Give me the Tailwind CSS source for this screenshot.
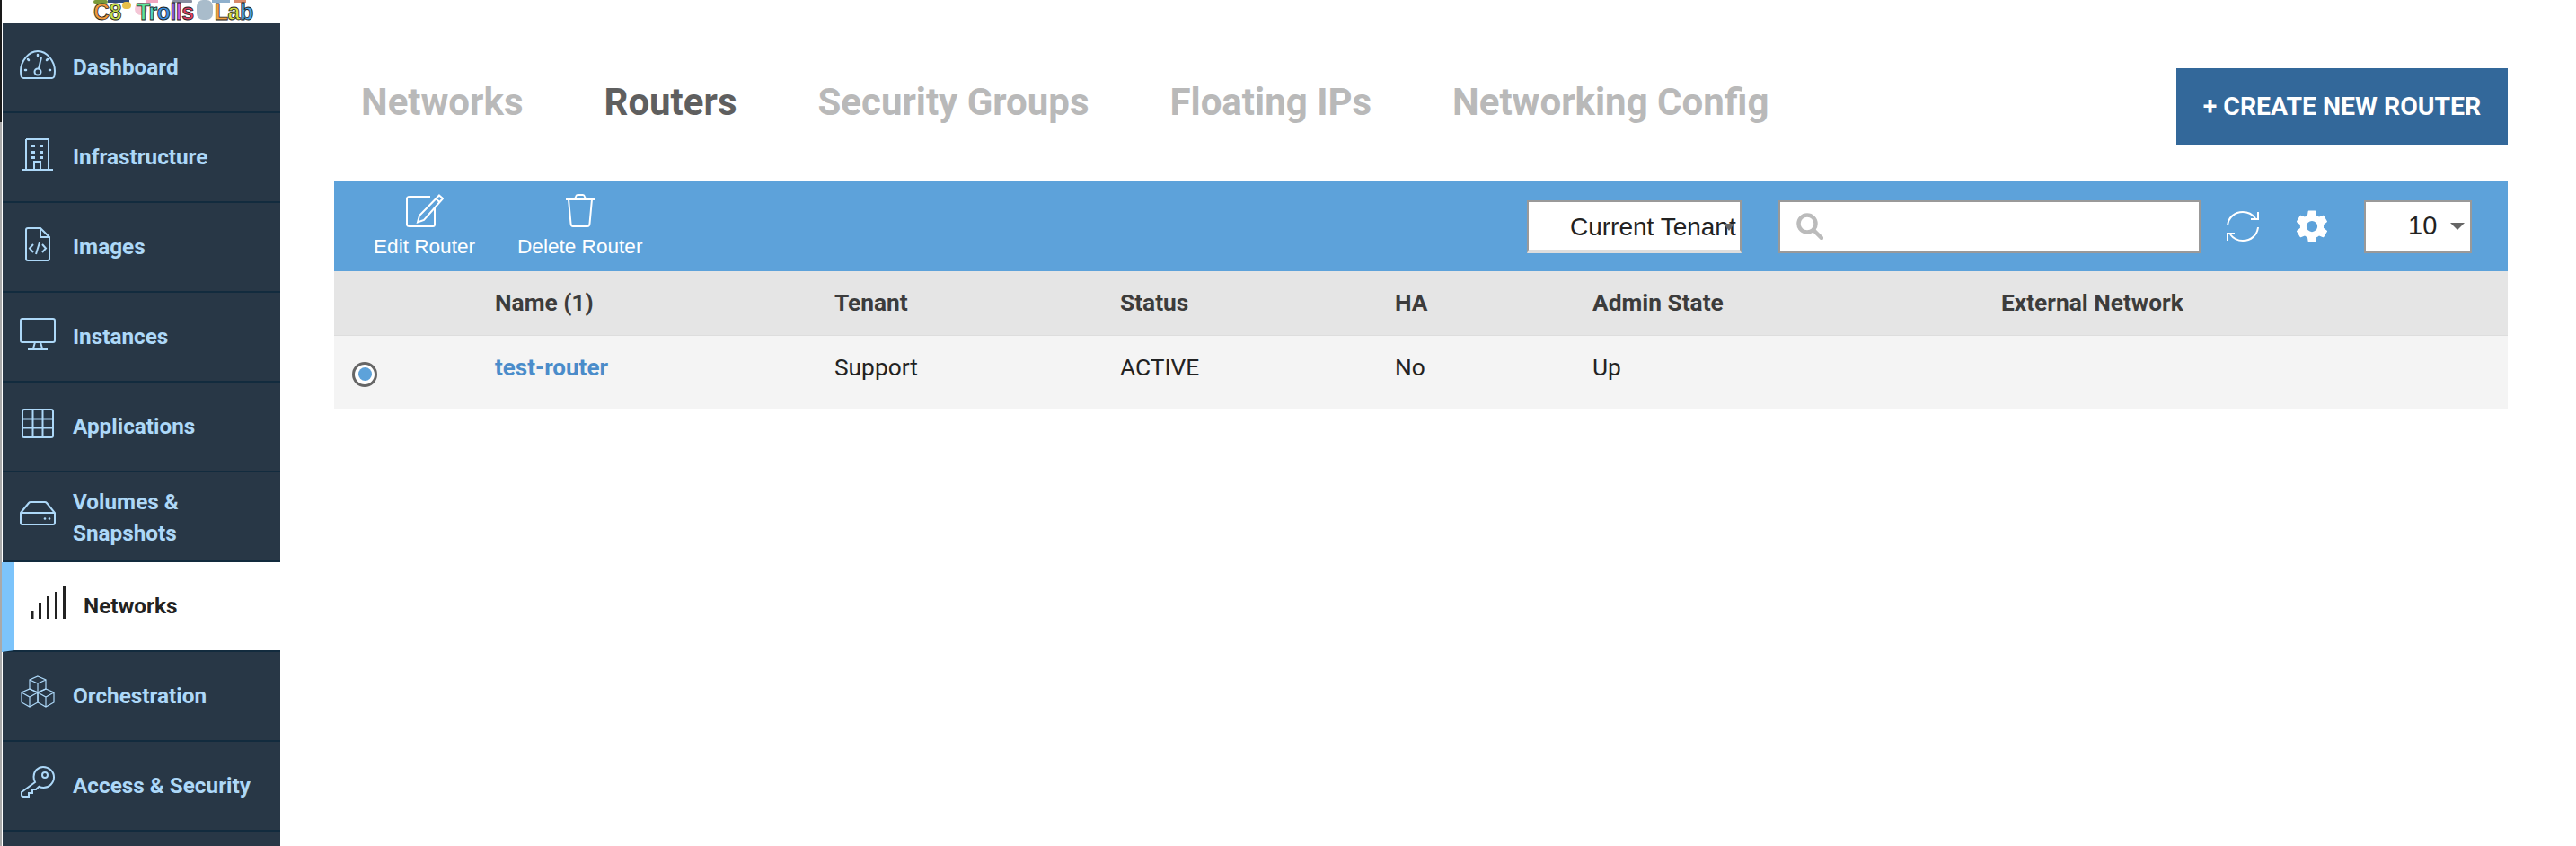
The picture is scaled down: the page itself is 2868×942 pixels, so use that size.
<!DOCTYPE html>
<html lang="en">
<head>
    <meta charset="UTF-8">
    <title>Routers</title>
    <script src="https://cdn.jsdelivr.net/npm/@tailwindcss/browser@4"></script>
</head>
<body class="bg-white font-['Roboto',sans-serif] overflow-hidden">
<div class="flex h-[942px] w-[2868px]">
    <!-- window edge -->
    <div class="w-[2px] flex flex-col shrink-0">
        <div class="h-[136px] bg-[#1a1a1a]"></div>
        <div class="flex-1 bg-[#a9a9a9]"></div>
    </div>

    <!-- Sidebar -->
    <aside class="w-[310px] shrink-0 flex flex-col overflow-hidden">
        <!-- logo -->
        <div class="h-[26px] relative overflow-hidden">
            <svg class="absolute left-[98px] top-0" width="182" height="26" viewBox="0 0 182 26">
                <rect x="4" y="0" width="16" height="4" rx="2" fill="#7a9a3a"/>
                <rect x="20" y="0" width="24" height="3" fill="#2f4a7a"/>
                <rect x="36" y="2" width="10" height="8" rx="4" fill="#e8c04a"/>
                <rect x="50" y="3" width="14" height="14" rx="7" fill="#f4c6d6"/>
                <rect x="62" y="0" width="14" height="3" fill="#f2a6c0"/>
                <rect x="92" y="0" width="22" height="3" rx="1" fill="#8a8fa0"/>
                <rect x="119" y="0" width="18" height="22" rx="7" fill="#a9bccb"/>
                <rect x="136" y="0" width="20" height="3" fill="#8fb0cc"/>
                <rect x="160" y="0" width="14" height="3" fill="#d98a6a"/>
            </svg>
            <div class="absolute left-[102px] top-0 flex font-['Liberation_Sans',sans-serif] font-bold text-[25px] leading-[26px] tracking-[-0.5px] whitespace-nowrap [-webkit-text-stroke:0.8px_#222]">
                <span><span class="text-[#f0993a]">C</span><span class="text-[#c8e04a]">8</span></span>
                <span class="ml-[17px]"><span class="text-[#5fe39a]">T</span><span class="text-[#4fd0c0]">r</span><span class="text-[#3d8fe0]">o</span><span class="text-[#8a5ae0]">l</span><span class="text-[#d05ae0]">l</span><span class="text-[#e0405f]">s</span></span>
                <span class="ml-[23px]"><span class="text-[#f0a040]">L</span><span class="text-[#d8e040]">a</span><span class="text-[#4aa8e8]">b</span></span>
            </div>
        </div>

        <nav class="flex-1 bg-[#283746] flex flex-col text-[#add8f8] text-[24.3px] font-bold ml-[1px]">
            <a class="h-[100px] shrink-0 border-b-2 border-[#122b3e] flex items-center pl-[19px] gap-[19px]">
                <svg class="w-[40px] h-[40px] shrink-0 mb-[6px]" viewBox="0 0 40 40" fill="none" stroke="currentColor" stroke-width="2">
                    <path d="M4 35h32c1.500 0 2-1 2.300-2 .5-2 .7-4 .7-6C39 16.500 30.500 5 20 5S1 16.500 1 27c0 2 .2 4 .7 6 .3 1 .8 2 2.300 2z"/>
                    <circle cx="20" cy="28" r="3.500"/>
                    <path d="M21 24.500 24 12"/>
                    <path d="M20 9v1M9 14l1 1M31 14l-1 1M6 26h1M33 26h1" stroke-linecap="round" stroke-width="2.500"/>
                </svg>
                <span>Dashboard</span>
            </a>
            <a class="h-[100px] shrink-0 border-b-2 border-[#122b3e] flex items-center pl-[19px] gap-[19px]">
                <svg class="w-[40px] h-[40px] shrink-0 mb-[6px]" viewBox="0 0 40 40" fill="none" stroke="currentColor" stroke-width="2">
                    <path d="M7 3h25v33M7 3v33M2 37h35"/>
                    <path d="M16 36v-8h7v8"/>
                    <path d="M13 9h4v3h-4zM22 9h4v3h-4zM13 16h4v3h-4zM22 16h4v3h-4zM13 22h4v3h-4zM22 22h4v3h-4z" fill="currentColor" stroke="none"/>
                </svg>
                <span>Infrastructure</span>
            </a>
            <a class="h-[100px] shrink-0 border-b-2 border-[#122b3e] flex items-center pl-[19px] gap-[19px]">
                <svg class="w-[40px] h-[40px] shrink-0 mb-[6px]" viewBox="0 0 40 40" fill="none" stroke="currentColor" stroke-width="2">
                    <path d="M9 2h14l10 10v24c0 1-1 2-2 2H9c-1 0-2-1-2-2V4c0-1 1-2 2-2z"/>
                    <path d="M23 2v10h10"/>
                    <path d="M15 20l-4 4.500 4 4.500M25 20l4 4.500-4 4.500M22 18l-4 13"/>
                </svg>
                <span>Images</span>
            </a>
            <a class="h-[100px] shrink-0 border-b-2 border-[#122b3e] flex items-center pl-[19px] gap-[19px]">
                <svg class="w-[40px] h-[40px] shrink-0 mb-[6px]" viewBox="0 0 40 40" fill="none" stroke="currentColor" stroke-width="2">
                    <rect x="1" y="3" width="38" height="26" rx="2"/>
                    <path d="M17 29l-2 7M23 29l2 7M9 37h22"/>
                </svg>
                <span>Instances</span>
            </a>
            <a class="h-[100px] shrink-0 border-b-2 border-[#122b3e] flex items-center pl-[19px] gap-[19px]">
                <svg class="w-[40px] h-[40px] shrink-0 mb-[6px]" viewBox="0 0 40 40" fill="none" stroke="currentColor" stroke-width="2">
                    <rect x="3" y="4" width="34" height="31" rx="2"/>
                    <path d="M3 14.500h34M3 24.500h34M14.500 4v31M25.500 4v31"/>
                </svg>
                <span>Applications</span>
            </a>
            <a class="h-[100px] shrink-0 border-b-2 border-[#122b3e] flex items-center pl-[19px] gap-[19px]">
                <svg class="w-[40px] h-[40px] shrink-0 mb-[8px]" viewBox="0 0 40 40" fill="none" stroke="currentColor" stroke-width="2">
                    <path d="M1 20l9-11c.5-.6 1-1 2-1h16c1 0 1.500.4 2 1l9 11v11c0 1-1 2-2 2H3c-1 0-2-1-2-2z"/>
                    <path d="M1 20h38"/>
                    <circle cx="28" cy="26.500" r="1.300" fill="currentColor" stroke="none"/>
                    <circle cx="33" cy="26.500" r="1.300" fill="currentColor" stroke="none"/>
                </svg>
                <span class="leading-[35px] pt-[1px]">Volumes &amp;<br>Snapshots</span>
            </a>
            <a class="h-[100px] shrink-0 border-b-2 border-[#122b3e] bg-white text-[#222] flex items-center -ml-[1px] border-l-[14px] border-l-[#7cc4fb] pl-[18px] gap-[19px]">
                <svg class="w-[40px] h-[40px] shrink-0 mb-[6px]" viewBox="0 0 40 40" fill="currentColor">
                    <rect x="0" y="28" width="3.500" height="9"/>
                    <rect x="9" y="19" width="3" height="18"/>
                    <rect x="18" y="12" width="3" height="25"/>
                    <rect x="27" y="7" width="3" height="30" />
                    <rect x="36" y="1" width="3" height="36"/>
                </svg>
                <span>Networks</span>
            </a>
            <a class="h-[100px] shrink-0 border-b-2 border-[#122b3e] flex items-center pl-[19px] gap-[19px]">
                <svg class="w-[40px] h-[40px] shrink-0 mb-[6px]" viewBox="0 0 40 40" fill="none" stroke="currentColor" stroke-width="1.200">
                    <path d="M20 1l9 4v10l-9 4-9-4V5zM11 5l9 4 9-4M20 9v10"/>
                    <path d="M11 15l9 4v11l-9 5-9-5V19zM2 19l9 5 9-5M11 24v11"/>
                    <path d="M29 15l9 4v11l-9 5-9-5V19zM20 19l9 5 9-5M29 24v11"/>
                </svg>
                <span>Orchestration</span>
            </a>
            <a class="h-[100px] shrink-0 border-b-2 border-[#122b3e] flex items-center pl-[19px] gap-[19px]">
                <svg class="w-[40px] h-[40px] shrink-0 mb-[6px]" viewBox="0 0 40 40" fill="none" stroke="currentColor" stroke-width="2">
                    <path d="M17 19c-1-2-1.500-4-1.500-6C15.500 6.500 20.500 2 26 2c6.500 0 12 5 12 11.500S32.500 25 26.500 25c-2 0-3.500-.4-5-1.200L18 27h-4v4h-4v4H4c-1 0-2-.8-2-2v-3z"/>
                    <circle cx="28" cy="11" r="3"/>
                </svg>
                <span>Access &amp; Security</span>
            </a>
        </nav>
    </aside>

    <!-- Main -->
    <main class="flex-1 pl-[60px] pr-[76px] pt-[76px]">
        <div class="flex justify-between items-start h-[86px]">
            <div class="flex gap-[90px] pl-[30px] pt-[10px] text-[42px] leading-[56px] font-bold text-[#b9b9b9] whitespace-nowrap">
                <span>Networks</span>
                <span class="text-[#5f5f5f]">Routers</span>
                <span>Security Groups</span>
                <span>Floating IPs</span>
                <span>Networking Config</span>
            </div>
            <button class="w-[369px] h-[86px] bg-[#33689a] text-white text-[28.4px] font-bold whitespace-nowrap">+ CREATE NEW ROUTER</button>
        </div>

        <!-- toolbar -->
        <div class="mt-[40px] h-[100px] bg-[#5da2da] flex items-center pl-[44px] pr-[40px] text-white">
            <div class="flex gap-[47px] font-['Liberation_Sans',sans-serif] text-[22.6px]">
                <div class="flex flex-col items-center">
                    <svg class="w-[42px] h-[37px] mb-[5px] mt-[4px]" viewBox="0 0 42 37" fill="none" stroke="currentColor" stroke-width="2">
                        <path d="M27 3H4C2.500 3 1 4 1 5.500v28C1 35 2.500 36 4 36h26c1.500 0 2-1 2-2.500V15"/>
                        <path d="M37 1.500l4 3.500-21 24-7 2.500 2-7.500zM33.500 5.500l4 3.500"/>
                    </svg>
                    <span>Edit Router</span>
                </div>
                <div class="flex flex-col items-center">
                    <svg class="w-[32px] h-[37px] mb-[5px] mt-[4px]" viewBox="0 0 32 37" fill="none" stroke="currentColor" stroke-width="2">
                        <path d="M0 6h32M3 6l2.500 27c.2 2 1 3 2.500 3h16c1.500 0 2.300-1 2.500-3L29 6M10 6l1-3c.3-1 1-2 2-2h6c1 0 1.700 1 2 2l1 3"/>
                    </svg>
                    <span>Delete Router</span>
                </div>
            </div>

            <div class="ml-auto flex items-center">
                <div class="relative w-[239px] h-[59px] bg-white border-2 border-[#999] border-b-[4px] border-b-[#ddd] flex items-center pl-[46px] pt-[3px] text-[#222] font-['Liberation_Sans',sans-serif] text-[28px] whitespace-nowrap">
                    Current Tenant
                    <span class="absolute right-[6px] top-[24px] w-0 h-0 border-x-[6px] border-x-transparent border-t-[8px] border-t-[#666]"></span>
                </div>
                <div class="ml-[41px] w-[470px] h-[59px] bg-white border-2 border-[#999] flex items-center pl-[18px]">
                    <svg class="w-[30px] h-[30px] text-[#bbb]" viewBox="0 0 30 30" fill="none" stroke="currentColor" stroke-width="4.500">
                        <circle cx="12" cy="12" r="9.500"/>
                        <path d="M19 19l9 9" stroke-linecap="round"/>
                    </svg>
                </div>
                <svg class="ml-[29px] w-[36px] h-[36px]" viewBox="0 0 36 36" fill="none" stroke="currentColor" stroke-width="2">
                    <path d="M1 17C2 8 9 2 18 2c6 0 11 3 14 7M35 2v8h-8"/>
                    <path d="M35 19c-1 9-8 15-17 15-6 0-11-3-14-7M1 34v-8h8"/>
                </svg>
                <svg class="ml-[38px] w-[42px] h-[42px]" viewBox="0 0 24 24" fill="currentColor">
                    <path fill-rule="evenodd" d="M19.400 13c.04-.33.06-.66.06-1s-.02-.67-.06-1l2.100-1.650a.5.5 0 0 0 .12-.64l-2-3.460a.5.5 0 0 0-.61-.22l-2.490 1a7.300 7.300 0 0 0-1.690-.98l-.38-2.650A.5.5 0 0 0 14 2h-4a.5.5 0 0 0-.49.420l-.38 2.650c-.61.25-1.170.59-1.690.98l-2.490-1a.5.5 0 0 0-.61.22l-2 3.460a.5.5 0 0 0 .12.64L4.560 11c-.04.33-.06.67-.06 1s.02.67.06 1l-2.100 1.650a.5.5 0 0 0-.12.64l2 3.460c.12.22.39.3.61.22l2.490-1c.52.4 1.080.73 1.690.98l.38 2.650c.05.24.25.42.49.42h4c.24 0 .44-.18.49-.42l.38-2.650c.61-.25 1.170-.59 1.690-.98l2.490 1c.22.08.49 0 .61-.22l2-3.460a.5.5 0 0 0-.12-.64zM12 15.500a3.500 3.500 0 1 1 0-7 3.500 3.500 0 0 1 0 7z"/>
                </svg>
                <div class="ml-[37px] relative w-[120px] h-[59px] bg-white border-2 border-[#999] flex items-center pl-[47px] text-[#222] font-['Liberation_Sans',sans-serif] text-[29px]">
                    10
                    <span class="absolute right-[6px] top-[23px] w-0 h-0 border-x-[8px] border-x-transparent border-t-[8px] border-t-[#666]"></span>
                </div>
            </div>
        </div>

        <!-- table -->
        <div class="grid grid-cols-[179px_378px_318px_306px_219px_456px_1fr] h-[72px] items-center bg-[#e5e5e5] border-b border-[#ddd] text-[26.3px] font-bold text-[#3c3c3c] whitespace-nowrap">
            <span></span>
            <span>Name (1)</span>
            <span>Tenant</span>
            <span>Status</span>
            <span>HA</span>
            <span class="ml-[1px]">Admin State</span>
            <span>External Network</span>
        </div>
        <div class="grid grid-cols-[179px_378px_318px_306px_219px_456px_1fr] h-[81px] items-center bg-[#f4f4f4] text-[26.3px] text-[#222] whitespace-nowrap">
            <span class="ml-[20px] mt-[4px] w-[28px] h-[28px] rounded-full border-[3px] border-[#666] bg-white flex items-center justify-center">
                <span class="w-[15px] h-[15px] rounded-full bg-[#5da2da]"></span>
            </span>
            <span class="mb-[10px] font-bold text-[26px] text-[#4a8cca]">test-router</span>
            <span class="mb-[10px]">Support</span>
            <span class="mb-[10px]">ACTIVE</span>
            <span class="mb-[10px]">No</span>
            <span class="mb-[10px] ml-[1px]">Up</span>
            <span></span>
        </div>
    </main>
</div>
</body>
</html>
